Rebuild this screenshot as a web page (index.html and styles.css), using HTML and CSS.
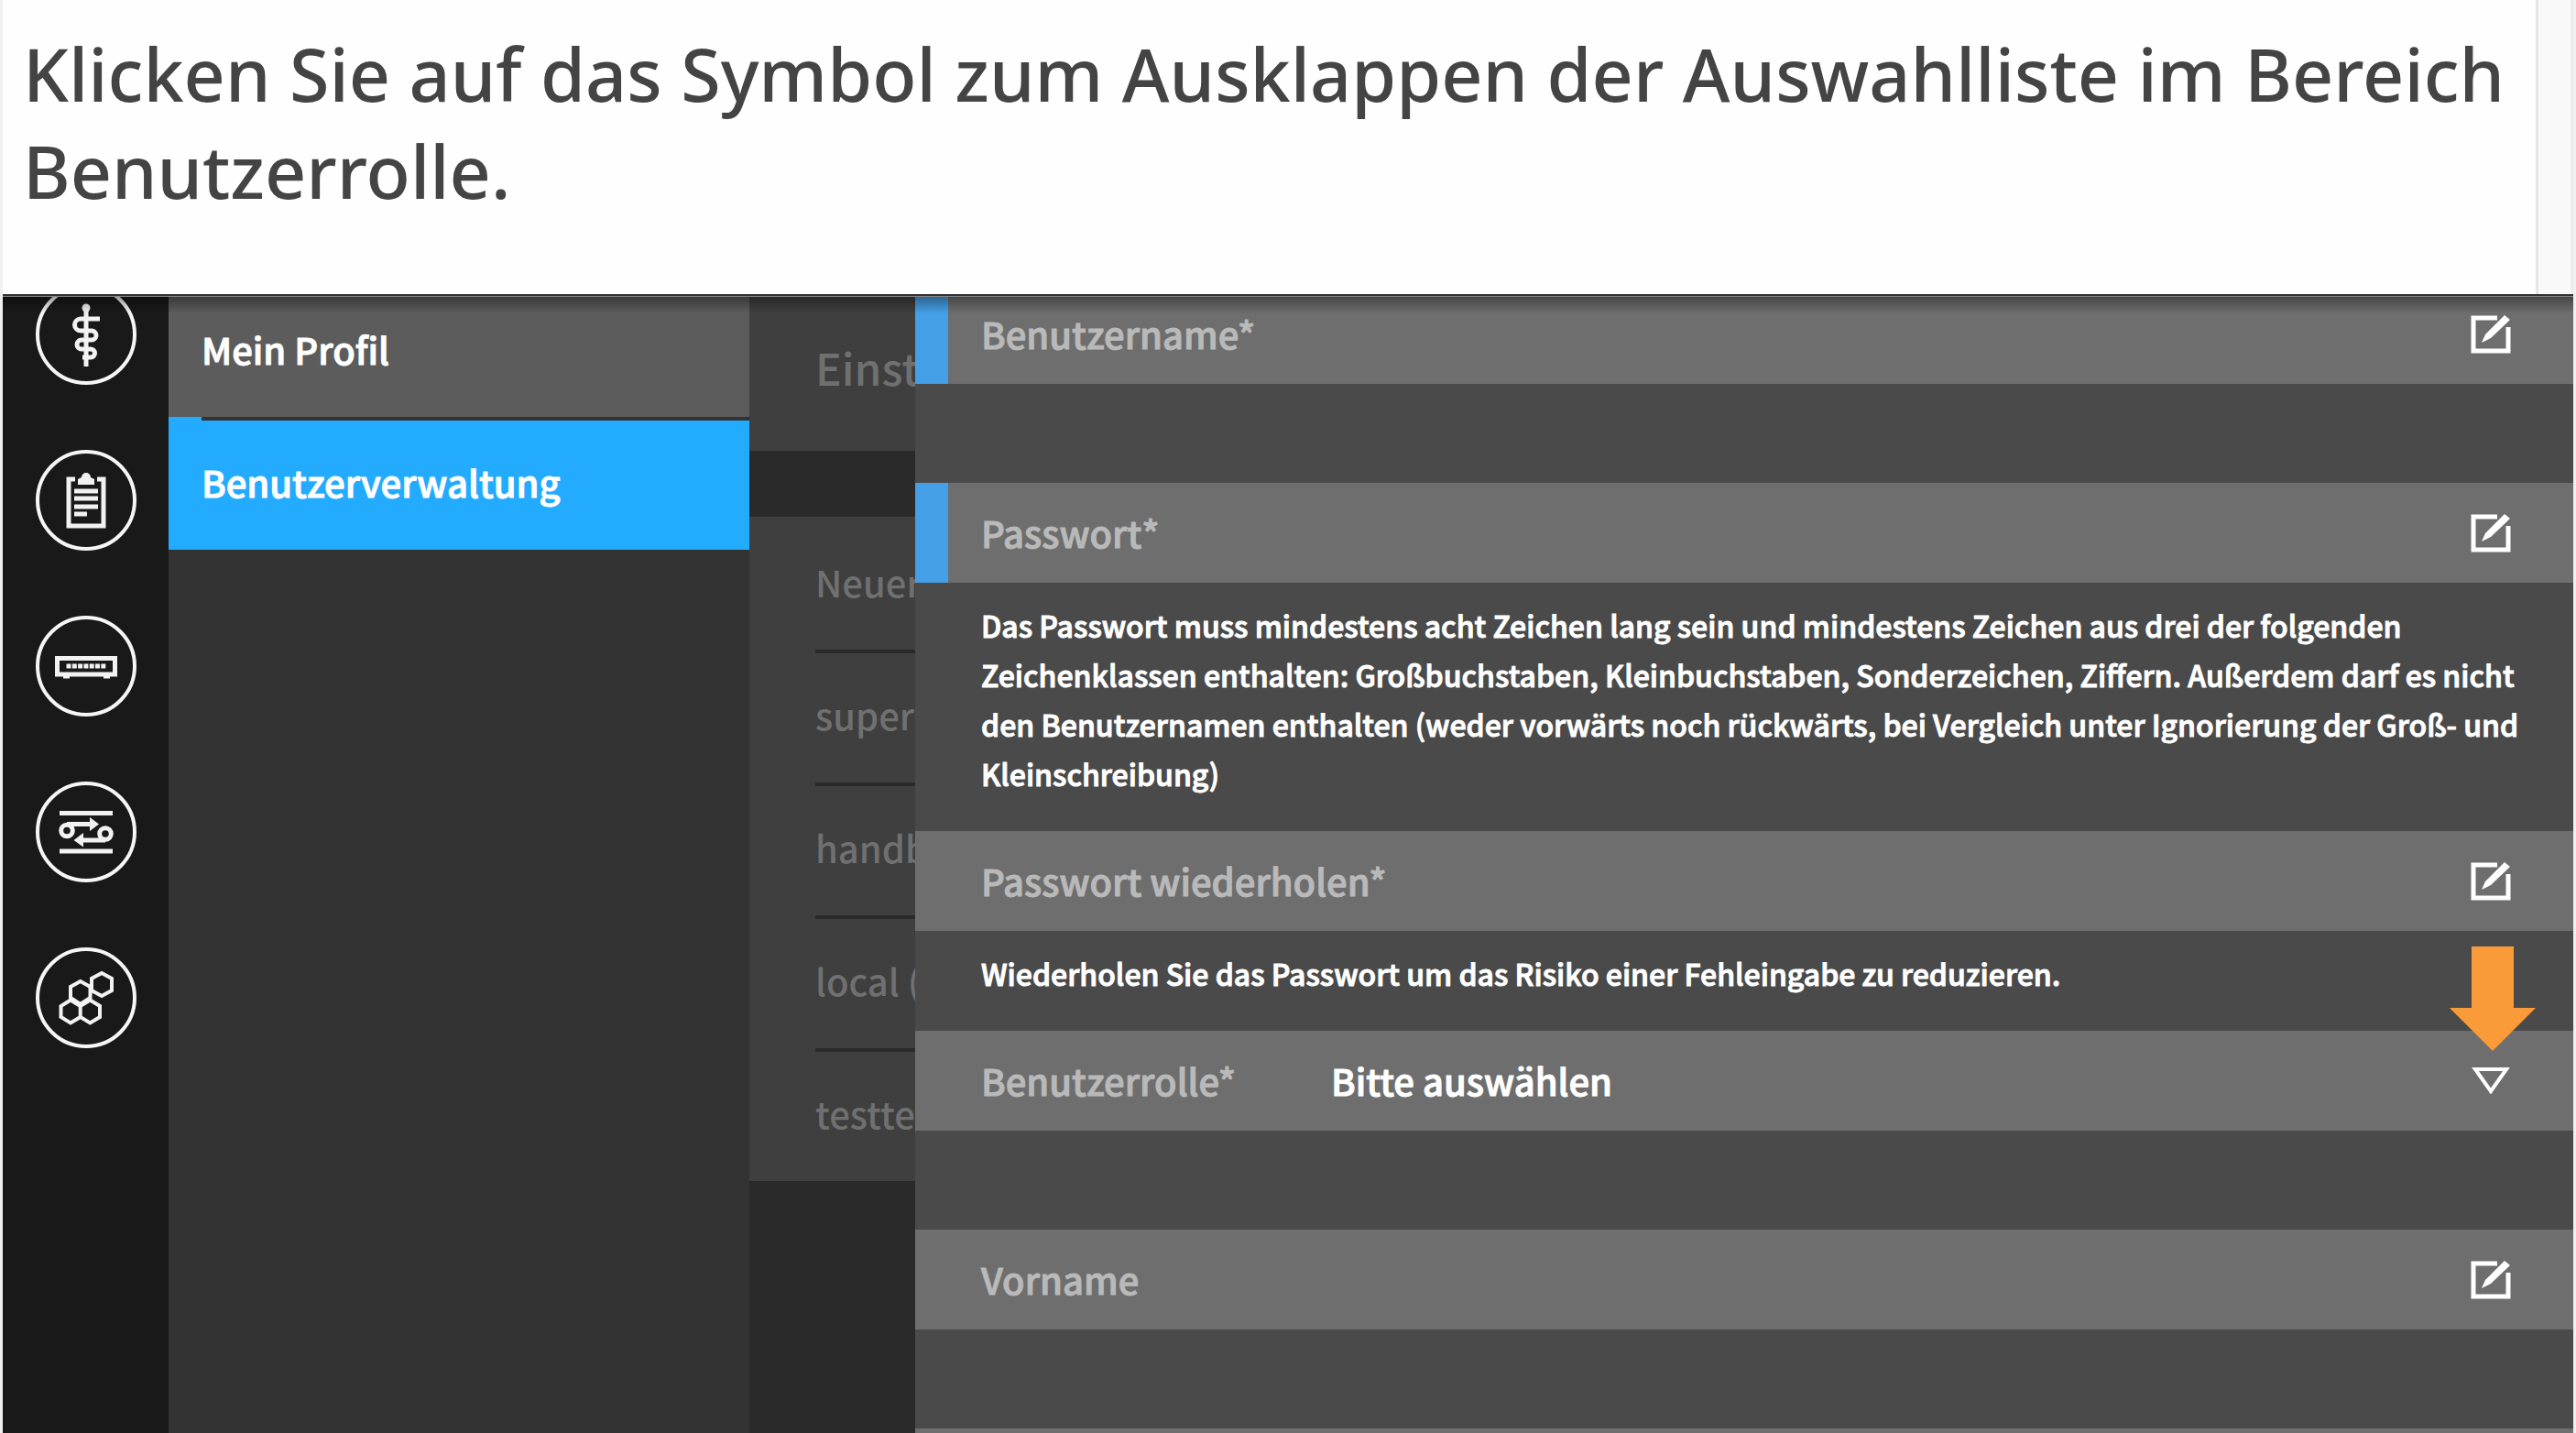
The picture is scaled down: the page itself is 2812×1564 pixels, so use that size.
FILE: index.html
```html
<!DOCTYPE html>
<html lang="de">
<head>
<meta charset="utf-8">
<meta name="viewport" content="width=device-width, initial-scale=1">
<title>Benutzerverwaltung</title>
<link rel="stylesheet" href="styles.css">
</head>
<body>
<svg class="sprite" aria-hidden="true">
  <symbol id="edit" viewBox="0 0 44 44">
    <path d="M29 4H3V40H41V14" fill="none" stroke="currentColor" stroke-width="5"/>
    <path d="M12 31L16 22L37 1L43 6L22 26Z" fill="currentColor"/>
  </symbol>
</svg>
<header class="task">
  <p class="task-text">Klicken Sie auf das Symbol zum Ausklappen der Auswahlliste im Bereich Benutzerrolle.</p>
  <div class="task-rail"></div>
</header>
<main class="app">
  <nav class="rail" aria-label="Hauptbereiche">
    <button class="rail-btn" type="button" aria-label="Medizin">
      <svg viewBox="0 0 110 110" fill="none" stroke="currentColor" stroke-width="5">
        <circle cx="55" cy="26" r="4.500" fill="currentColor" stroke="none"/>
        <path d="M55 26V90"/>
        <path d="M70 38H49a6 6 0 0 0 0 13H61a5 5 0 0 1 0 10H50a5 5 0 0 0 0 10H60a4 4 0 0 1 0 9H51"/>
      </svg>
    </button>
    <button class="rail-btn" type="button" aria-label="Aufgaben">
      <svg viewBox="0 0 110 110" fill="none" stroke="currentColor" stroke-width="5">
        <path d="M43 32H36V83H74V32H67"/>
        <path fill="currentColor" stroke="none" d="M46 38V32L50 30A5 5 0 0 1 60 30L64 32V38Z"/>
        <path stroke-width="5" d="M42 45H68M42 53H68M42 62H68M42 70H56"/>
      </svg>
    </button>
    <button class="rail-btn" type="button" aria-label="Geräte">
      <svg viewBox="0 0 110 110" fill="none" stroke="currentColor" stroke-width="5">
        <path d="M23.500 46.500H86.500V64H23.500Z"/>
        <path stroke-dasharray="5 1.300" d="M33.500 55H77"/>
        <path stroke-width="3" d="M30 67H37M74 67H81"/>
      </svg>
    </button>
    <button class="rail-btn" type="button" aria-label="Abläufe">
      <svg viewBox="0 0 110 110" fill="none" stroke="currentColor" stroke-width="5">
        <path d="M26 34.500H84M26 76H84"/>
        <circle cx="34" cy="53.500" r="6.300"/>
        <circle cx="76" cy="57" r="6.300"/>
        <path d="M34 46.500H62M76 64H50"/>
        <path fill="currentColor" stroke="none" d="M59 39L69 46.500L59 54ZM52 56L41.500 64L52 71.500Z"/>
      </svg>
    </button>
    <button class="rail-btn" type="button" aria-label="System">
      <svg viewBox="0 0 110 110" fill="none" stroke="currentColor" stroke-width="4">
        <path d="M72 28L83 34V47L72 53L61 47V34ZM48.700 37L59.500 43V55L48.700 62L38 55V43ZM38 57.500L27.500 64V76L38 82.500L48.700 76V64ZM59.300 57.500L70 64V76L59.300 82.500L48.700 76V64Z"/>
      </svg>
    </button>
  </nav>
  <nav class="menu" aria-label="Einstellungen">
    <a class="menu-item" href="#profil">Mein Profil</a>
    <a class="menu-item is-active" href="#benutzer" aria-current="page">Benutzerverwaltung</a>
  </nav>
  <section class="list">
    <h2 class="list-title">Einst</h2>
    <ul class="list-items">
      <li>Neuer</li>
      <li>super</li>
      <li>handb</li>
      <li>local (</li>
      <li>testte</li>
    </ul>
  </section>
  <form class="form">
    <div class="field is-required">
      <label for="user">Benutzername*</label>
      <input id="user" type="text">
      <button class="edit" type="button" aria-label="Bearbeiten"><svg><use href="#edit"/></svg></button>
    </div>
    <div class="spacer"></div>
    <div class="field is-required">
      <label for="pw">Passwort*</label>
      <input id="pw" type="password">
      <button class="edit" type="button" aria-label="Bearbeiten"><svg><use href="#edit"/></svg></button>
    </div>
    <p class="hint">Das Passwort muss mindestens acht Zeichen lang sein und mindestens Zeichen aus drei der folgenden Zeichenklassen enthalten: Großbuchstaben, Kleinbuchstaben, Sonderzeichen, Ziffern. Außerdem darf es nicht den Benutzernamen enthalten (weder vorwärts noch rückwärts, bei Vergleich unter Ignorierung der Groß- und Kleinschreibung)</p>
    <div class="field">
      <label for="pw2">Passwort wiederholen*</label>
      <input id="pw2" type="password">
      <button class="edit" type="button" aria-label="Bearbeiten"><svg><use href="#edit"/></svg></button>
    </div>
    <p class="hint">Wiederholen Sie das Passwort um das Risiko einer Fehleingabe zu reduzieren.</p>
    <div class="field">
      <label class="label-fixed" for="role">Benutzerrolle*</label>
      <select id="role"><option>Bitte auswählen</option></select>
      <svg class="caret" viewBox="0 0 44 32"><path d="M5 3H39L22 27Z" fill="none" stroke="currentColor" stroke-width="4"/></svg>
      <svg class="pointer" viewBox="0 0 94 114"><path d="M24 0H70V67H94L47 114L0 67H24Z" fill="#f99b38"/></svg>
    </div>
    <div class="spacer"></div>
    <div class="field">
      <label for="first">Vorname</label>
      <input id="first" type="text">
      <button class="edit" type="button" aria-label="Bearbeiten"><svg><use href="#edit"/></svg></button>
    </div>
    <div class="spacer"></div>
    <div class="field"></div>
  </form>
</main>
</body>
</html>
```
FILE: styles.css
```css
* { box-sizing: border-box; }

body {
  margin: 0;
  height: 100vh;
  display: flex;
  flex-direction: column;
  overflow: hidden;
  padding: 0 3px;
  background: #f0f0f0;
  font-family: "Noto Sans CJK SC", "Noto Sans", sans-serif;
  font-weight: 500;
}

button, input, select {
  font: inherit;
  color: inherit;
  background: none;
  border: 0;
  padding: 0;
  margin: 0;
}

.sprite { display: none; }

.task {
  display: flex;
  flex: none;
  background: #fefefe;
}

.task-text {
  flex: 1;
  margin: 0;
  padding: 28px 16px 81px 22px;
  font: 500 79px/106px "Noto Sans", sans-serif;
  color: #444;
}

.task-rail {
  width: 41px;
  background: #f9f9f9;
  border-left: 3px solid #e6e6e6;
  border-right: 3px solid #ececec;
}

.app {
  position: relative;
  flex: 1;
  min-height: 0;
  display: flex;
  overflow: hidden;
  border-top: 2px solid #2f3133;
  background: #2a2a2a;
  color: #fff;
}

/* edge line and shadow cast by the task header */
.app::before {
  content: "";
  position: absolute;
  inset: 0 0 auto;
  height: 18px;
  border-top: 1px solid #888;
  background: linear-gradient(rgba(0, 0, 0, .36), rgba(0, 0, 0, 0));
  pointer-events: none;
  z-index: 2;
}

/* the columns are scrolled up a little under the header */
.rail, .menu, .list, .form { margin-top: -13px; }

.rail {
  flex: none;
  width: 181px;
  display: flex;
  flex-direction: column;
  align-items: center;
  gap: 71px;
  background: #191919;
}

.rail-btn {
  width: 110px;
  height: 110px;
  border: 4px solid #f6f6f6;
  border-radius: 50%;
  color: #f2f2f2;
}

.rail-btn svg {
  display: block;
  width: 110px;
  height: 110px;
  margin: -4px;
}

.menu {
  flex: none;
  width: 634px;
  background: #333;
}

.menu-item {
  display: block;
  height: 145px;
  padding-left: 36px;
  font-size: 40px;
  line-height: 143px;
  color: #fff;
  -webkit-text-stroke: 1px;
  text-decoration: none;
  background: #5c5c5c;
}

.menu-item.is-active {
  background: linear-gradient(#333, #333) 36px 0 / 100% 4px no-repeat #23abff;
}

.list {
  flex: none;
  width: 181px;
  overflow: hidden;
  white-space: nowrap;
  color: #707070;
}

.list-title {
  margin: 0 0 72px;
  padding-left: 72px;
  height: 182px;
  font-size: 48px;
  font-weight: 500;
  line-height: 180px;
  background: #3f3f3f;
}

.list-items {
  margin: 0;
  padding: 0 0 0 72px;
  list-style: none;
  background: #3f3f3f;
}

.list-items li {
  height: 145px;
  font-size: 40px;
  line-height: 143px;
}

.list-items li + li {
  border-top: 4px solid #2a2a2a;
  line-height: 134px;
}

.form {
  flex: 1;
  min-width: 0;
  background: #4a4a4a;
}

.field {
  position: relative;
  display: flex;
  align-items: center;
  height: 109px;
  padding: 0 68px 0 72px;
  background: #6e6e6e;
  font-size: 40px;
}

.field.is-required {
  padding-left: 36px;
  border-left: 36px solid #459fe6;
}

.field label {
  padding-bottom: 2px;
  color: #b9b9b9;
  -webkit-text-stroke: 1px;
  white-space: nowrap;
}

.field .label-fixed { width: 382px; }

.field input { flex: 1; min-width: 0; }

.field select {
  flex: 1;
  min-width: 0;
  padding-bottom: 2px;
  appearance: none;
  -webkit-text-stroke: 1px;
}

.edit { width: 44px; height: 44px; }

.edit svg { display: block; width: 44px; height: 44px; }

.caret { width: 44px; height: 32px; pointer-events: none; }

.pointer {
  position: absolute;
  right: 41px;
  bottom: 87px;
  width: 94px;
  height: 114px;
}

.spacer { height: 108px; }

.hint {
  margin: 0;
  padding: 19px 48px 36px 72px;
  font-size: 32px;
  line-height: 54px;
  -webkit-text-stroke: 1px;
}
```
